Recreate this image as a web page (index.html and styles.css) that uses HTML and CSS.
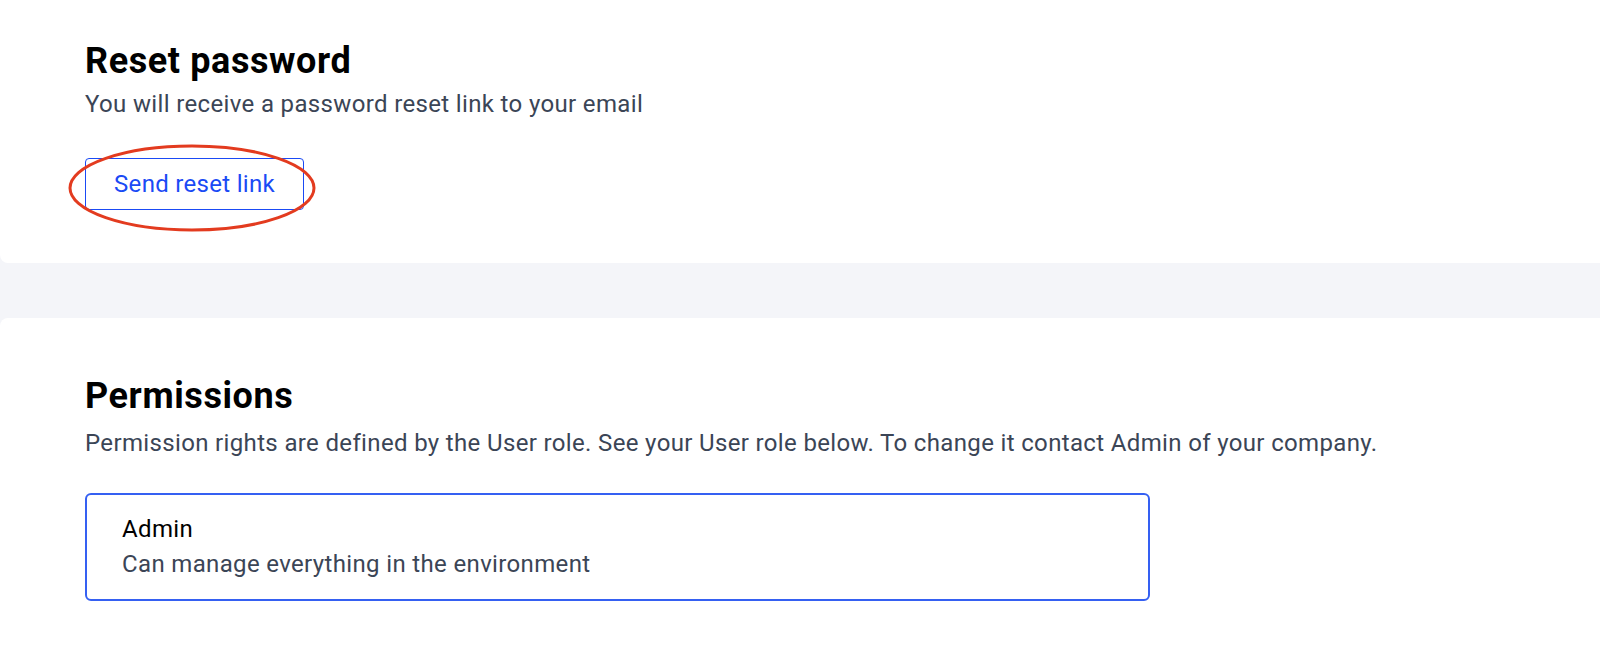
FILE: index.html
```html
<!DOCTYPE html>
<html lang="en">
<head>
    <meta charset="UTF-8">
    <meta name="viewport" content="width=device-width, initial-scale=1.0">
    <title>Account settings</title>
    <link rel="stylesheet" href="styles.css">
</head>
<body>
    <div class="page">
        <section class="card card-reset">
            <h2>Reset password</h2>
            <p class="hint">You will receive a password reset link to your email</p>
            <div class="action">
                <button type="button" class="btn-outline">Send reset link</button>
                <!-- annotation circled around the button -->
                <svg class="mark" width="252" height="92" viewBox="0 0 252 92">
                    <ellipse cx="126" cy="46" rx="122" ry="42" fill="none" stroke="#e33b1f" stroke-width="3"/>
                </svg>
            </div>
        </section>

        <section class="card card-perm">
            <h2>Permissions</h2>
            <p class="hint">Permission rights are defined by the User role. See your User role below. To change it contact Admin of your company.</p>
            <div class="role">
                <div class="role-name">Admin</div>
                <div class="role-desc">Can manage everything in the environment</div>
            </div>
        </section>
    </div>
</body>
</html>
```

FILE: styles.css
```css
body {
    font-family: Roboto, "Liberation Sans", sans-serif;
    background-color: #f4f5f9;
    margin: 0;
    padding: 0;
    overflow: hidden;
}

.page {
    margin-top: -10px;
    margin-right: -10px;
    display: flex;
    flex-direction: column;
    gap: 55px;
}

.card {
    background-color: #fff;
    border-radius: 8px;
    padding: 0 0 0 85px;
}

.card-reset {
    padding-top: 51px;
    padding-bottom: 53px;
}

.card-perm {
    padding-top: 58px;
    padding-bottom: 60px;
}

h2 {
    margin: 0;
    font-size: 36px;
    line-height: 40px;
    font-weight: 700;
    letter-spacing: 0.6px;
    color: #000;
}

.hint {
    margin: 8px 0 0;
    font-size: 24px;
    line-height: 30px;
    letter-spacing: 0.35px;
    color: #3b4556;
}

.card-perm .hint {
    margin-top: 12px;
}

.action {
    position: relative;
    margin-top: 39px;
}

.btn-outline {
    height: 52px;
    width: 219px;
    padding: 0;
    background: #fff;
    border: 1.5px solid #1a4af5;
    border-radius: 4px;
    color: #1a4af5;
    font-family: inherit;
    font-size: 24px;
    letter-spacing: 0.3px;
    cursor: pointer;
}

.mark {
    position: absolute;
    left: -19px;
    top: -16px;
    pointer-events: none;
}

.role {
    margin-top: 35px;
    width: 1065px;
    box-sizing: border-box;
    padding: 19px 35px 20px 35px;
    border: 2px solid #3560f2;
    border-radius: 6px;
}

.role-name {
    font-size: 24px;
    line-height: 30px;
    letter-spacing: 0.35px;
    color: #000;
}

.role-desc {
    margin-top: 5px;
    font-size: 24px;
    line-height: 30px;
    letter-spacing: 0.35px;
    color: #3b4556;
}
```
